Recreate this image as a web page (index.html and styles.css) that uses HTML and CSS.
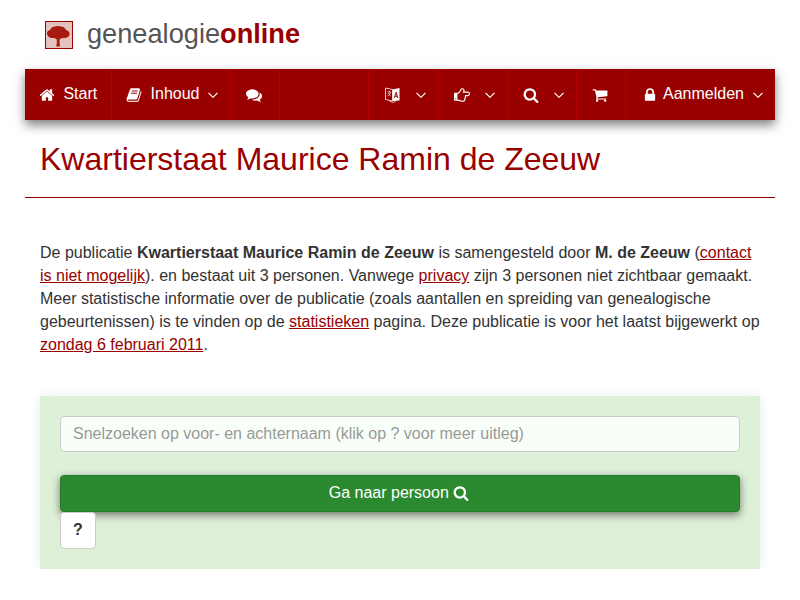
FILE: index.html
```html
<!DOCTYPE html>
<html lang="nl">
<head>
    <meta charset="UTF-8">
    <meta name="viewport" content="width=device-width, initial-scale=1.0">
    <title>Kwartierstaat Maurice Ramin de Zeeuw</title>
    <link rel="stylesheet" href="styles.css">
</head>
<body>
    <div class="page">
        <!-- Logo -->
        <header class="brand">
            <svg class="brand-logo" viewBox="0 0 28 28">
                <rect x="0.5" y="0.5" width="27" height="27" fill="#e2c3bf" stroke="#990000"/>
                <path class="tree" d="M2 13.500c-.5-2.500 1-4 3-4.500 1-2.500 3-3.500 5-3.500 1-.8 4-.8 6 0 2 0 4 1 5 3.500 2 .5 4 2 3.500 4.500-.5 2.500-3 4-6 3.500-1.500 0-3 .5-3.800 1.500-.3 1.500-.2 4 .5 7h-4c.7-3 .8-5.500.5-7-.8-1-2.300-1.500-3.800-1.500-3 .5-5-1-5.500-3.500z" fill="#a81c10"/>
            </svg>
            <span class="brand-name">genealogie<b>online</b></span>
        </header>

        <!-- Navigation -->
        <nav class="navbar">
            <a class="nav-item">
                <svg class="icon icon-text" viewBox="0 0 1792 1792"><path d="M1472 992v480q0 26-19 45t-45 19h-384v-384h-256v384h-384q-26 0-45-19t-19-45v-480q0-1 .5-3t.5-3l575-474 575 474q1 2 1 6zm223-69l-62 74q-8 9-21 11h-3q-13 0-21-7l-692-577-692 577q-12 8-24 7-13-2-21-11l-62-74q-8-10-7-23.500t11-21.500l719-599q32-26 76-26t76 26l244 204v-195q0-14 9-23t23-9h192q14 0 23 9t9 23v408l219 182q10 8 11 21.500t-7 23.500z"/></svg>
                Start
            </a>
            <a class="nav-item">
                <svg class="icon icon-text" viewBox="0 0 1792 1792"><path d="M1703 478q40 57 18 129l-275 906q-19 64-76.500 107.500t-122.500 43.500h-923q-77 0-148.500-53.500t-99.500-131.500q-24-67-2-127 0-4 3-27t4-37q1-8-3-21.500t-3-19.500q2-11 8-21t16.500-23.500 16.500-23.500q23-38 45-91.500t30-91.500q3-10 .5-30t-.5-28q3-11 17-28t17-23q21-36 42-92t25-90q1-9-2.500-32t.5-28q4-13 22-30.500t22-22.500q19-26 42.500-84.500t27.500-96.500q1-8-3-25.500t-2-26.500q2-8 9-18t18-23 17-21q8-12 16.500-30.500t15-35 16-36 19.500-32 26.500-23.500 36-11.500 47.500 5.500l-1 3q38-9 51-9h761q74 0 114 56t18 130l-274 906q-36 119-71.500 153.500t-128.500 34.500h-869q-27 0-38 15-11 16-1 43 24 70 144 70h923q29 0 56-15.500t35-41.500l300-987q7-22 5-57 38 15 59 43zm-1064 2q-4 13 2 22.500t20 9.500h608q13 0 25.500-9.500t16.500-22.500l21-64q4-13-2-22.500t-20-9.500h-608q-13 0-25.500 9.500t-16.500 22.500zm-83 256q-4 13 2 22.500t20 9.500h608q13 0 25.500-9.500t16.500-22.500l21-64q4-13-2-22.500t-20-9.500h-608q-13 0-25.500 9.500t-16.500 22.500z"/></svg>
                Inhoud
                <svg class="caret" viewBox="0 0 10 6"><path d="M.5 .8l4.500 4.500 4.500-4.500"/></svg>
            </a>
            <a class="nav-item">
                <svg class="icon icon-solo" viewBox="0 0 1792 1792"><path d="M1408 768q0 139-94 257t-256.500 186.500-353.500 68.500q-86 0-176-16-124 88-278 128-36 9-86 16h-3q-11 0-20.500-8t-11.500-21q-1-3-1-6.500t.5-6.500 2-6l2.500-5 3.500-5.500 4-5 4.500-5 4-4.500q5-6 23-25t26-29.500 22.500-29 25-38.500 20.500-44q-124-72-195-177t-71-224q0-139 94-257t256.500-186.500 353.500-68.500 353.500 68.500 256.500 186.500 94 257zm384 256q0 120-71 224.500t-195 176.500q10 24 20.500 44t25 38.500 22.500 29 26 29.500 23 25q1 1 4 4.500t4.500 5 4 5 3.500 5.500l2.500 5 2 6 .5 6.500-1 6.500q-3 14-13 22t-22 7q-50-7-86-16-154-40-278-128-90 16-176 16-271 0-472-132 58 4 88 4 161 0 309-45t264-129q125-92 192-212t67-254q0-77-23-152 129 71 204 178t75 230z"/></svg>
            </a>

            <div class="nav-right">
                <a class="nav-item">
                    <svg class="icon icon-lang" viewBox="0 0 14 16">
                        <path d="M0 1l7 1.500v11.500l-7-1.500z" fill="none" stroke="#fff" stroke-width="0.8"/>
                        <path d="M2 5h3.500M3.700 4v1M5 5c-.3 2-1.500 3.500-3 4M2.800 6c.4 1.200 1.200 2.200 2.400 2.800" fill="none" stroke="#fff" stroke-width="0.7"/>
                        <path d="M7 2.500l7-1.500v12.500l-7 .5z"/>
                        <path d="M8.300 11l1.900-6h1l1.500 6h-1.200l-.3-1.300h-1.700l-.4 1.300zM10 8.800h1.100l-.5-2.200z" fill="#990000"/>
                        <path d="M4 14l3.500 1.500 3-1.500" fill="none" stroke="#fff" stroke-width="0.7"/>
                    </svg>
                    <svg class="caret" viewBox="0 0 10 6"><path d="M.5 .8l4.500 4.500 4.500-4.500"/></svg>
                </a>
                <a class="nav-item">
                    <svg class="icon icon-gap" viewBox="0 0 1792 1792"><path d="M256 1344q0-26-19-45t-45-19-45 19-19 45 19 45 45 19 45-19 19-45zm1408-576q0-51-39-89.500t-89-38.500h-576q0-20 15-48.500t33-55 33-68 15-84.500q0-67-44.500-97.500t-115.500-30.500q-24 0-90 139-24 44-37 65-40 64-112 145-71 81-101 106-69 57-140 57h-32v640h32q72 0 167 32t193.500 64 179.500 32q189 0 189-167 0-26-5-56 30-16 47.500-52.500t17.500-73.500-18-69q53-50 53-119 0-25-10-55.500t-25-47.500h331q52 0 90-38t38-90zm128-1q0 105-75.500 181t-180.500 76h-169q-4 62-37 119 3 21 3 43 0 101-60 178 1 139-85 219.500t-227 80.500q-133 0-322-69-164-59-223-59h-288q-53 0-90.500-37.500t-37.500-90.500v-640q0-53 37.500-90.500t90.500-37.500h288q10 0 21.500-4.500t23.500-14 22.500-18 24-22.500 20.500-21.500 19-21.500 14-17q65-74 100-129 13-21 33-62t37-72 40.500-63 55-49.500 69.500-17.500q125 0 206.500 67t81.500 189q0 68-22 128h374q104 0 180 76t76 179z"/></svg>
                    <svg class="caret" viewBox="0 0 10 6"><path d="M.5 .8l4.500 4.500 4.500-4.500"/></svg>
                </a>
                <a class="nav-item">
                    <svg class="icon icon-gap" viewBox="0 0 1792 1792"><path d="M1216 832q0-185-131.500-316.500t-316.500-131.500-316.500 131.500-131.500 316.500 131.500 316.500 316.500 131.500 316.500-131.500 131.500-316.500zm512 832q0 52-38 90t-90 38q-54 0-90-38l-343-342q-179 124-399 124-143 0-273.500-55.500t-225-150-150-225-55.500-273.500 55.500-273.500 150-225 225-150 273.500-55.500 273.500 55.500 225 150 150 225 55.500 273.500q0 220-124 399l343 343q37 37 37 90z"/></svg>
                    <svg class="caret" viewBox="0 0 10 6"><path d="M.5 .8l4.500 4.500 4.500-4.500"/></svg>
                </a>
                <a class="nav-item">
                    <svg class="icon icon-solo" viewBox="0 0 1792 1792"><path d="M704 1536q0 52-38 90t-90 38-90-38-38-90 38-90 90-38 90 38 38 90zm896 0q0 52-38 90t-90 38-90-38-38-90 38-90 90-38 90 38 38 90zm128-1088v512q0 24-16.500 42.500t-40.500 21.500l-1044 122q13 60 13 70 0 16-24 64h920q26 0 45 19t19 45-19 45-45 19h-1024q-26 0-45-19t-19-45q0-11 8-31.500t16-36 21.500-40 15.500-29.500l-177-823h-204q-26 0-45-19t-19-45 19-45 45-19h256q16 0 28.500 6.500t19.500 15.500 13 24.500 8 26 5.500 29.500 4.500 26h1201q26 0 45 19t19 45z"/></svg>
                </a>
                <a class="nav-item nav-last">
                    <svg class="icon icon-lock" viewBox="0 0 1792 1792"><path d="M640 768h512v-192q0-106-75-181t-181-75-181 75-75 181v192zm832 96v576q0 40-28 68t-68 28h-960q-40 0-68-28t-28-68v-576q0-40 28-68t68-28h32v-192q0-184 132-316t316-132 316 132 132 316v192h32q40 0 68 28t28 68z"/></svg>
                    Aanmelden
                    <svg class="caret" viewBox="0 0 10 6"><path d="M.5 .8l4.500 4.500 4.500-4.500"/></svg>
                </a>
            </div>
        </nav>

        <!-- Title -->
        <h1 class="page-title">Kwartierstaat Maurice Ramin de Zeeuw</h1>

        <!-- Intro -->
        <p class="intro">De publicatie <b>Kwartierstaat Maurice Ramin de Zeeuw</b> is samengesteld door <b>M. de Zeeuw</b> (<a>contact is niet mogelijk</a>). en bestaat uit 3 personen. Vanwege <a>privacy</a> zijn 3 personen niet zichtbaar gemaakt. Meer statistische informatie over de publicatie (zoals aantallen en spreiding van genealogische gebeurtenissen) is te vinden op de <a>statistieken</a> pagina. Deze publicatie is voor het laatst bijgewerkt op <a>zondag 6 februari 2011</a>.</p>

        <!-- Search -->
        <form class="search-panel">
            <input class="search-input" type="text" placeholder="Snelzoeken op voor- en achternaam (klik op ? voor meer uitleg)">
            <button class="btn-go" type="button">Ga naar persoon
                <svg class="icon" viewBox="0 0 1792 1792"><path d="M1216 832q0-185-131.500-316.500t-316.500-131.500-316.500 131.500-131.500 316.500 131.500 316.500 316.500 131.500 316.500-131.500 131.500-316.500zm512 832q0 52-38 90t-90 38q-54 0-90-38l-343-342q-179 124-399 124-143 0-273.500-55.500t-225-150-150-225-55.500-273.500 55.500-273.500 150-225 225-150 273.500-55.500 273.500 55.500 225 150 150 225 55.500 273.500q0 220-124 399l343 343q37 37 37 90z"/></svg>
            </button>
            <button class="btn-help" type="button">?</button>
        </form>
    </div>
</body>
</html>
```

FILE: styles.css
```css
html, body {
    margin: 0;
    overflow: hidden;
}
body {
    font-family: "Liberation Sans", Arial, sans-serif;
    font-size: 16px;
    line-height: 1.42857;
    color: #333;
    background: #fff;
}
.page {
    width: 750px;
    margin: 0 auto;
}

/* Logo */
.brand {
    display: flex;
    align-items: center;
    height: 69px;
    padding-left: 20px;
}
.brand-logo {
    width: 28px;
    height: 28px;
    margin-right: 14px;
}
.tree {
    filter: blur(0.4px);
}
.brand-name {
    font-size: 27.2px;
    color: #555;
}
.brand-name b {
    color: #990000;
}

/* Navigation */
.navbar {
    display: flex;
    height: 51px;
    background: #990000;
    color: #fff;
    box-shadow: 0 5px 10px rgba(0, 0, 0, 0.5);
}
.nav-item {
    display: flex;
    align-items: center;
    padding: 0 14px 0 15px;
    border-right: 1px solid #b30000;
    cursor: pointer;
}
.nav-right {
    display: flex;
    margin-left: auto;
    border-left: 1px solid #b30000;
}
.nav-last {
    border-right: none;
}
.icon {
    width: 16px;
    height: 16px;
    fill: currentColor;
    flex: none;
}
.icon-text {
    margin: 0 8.4px 0 -1px;
}
.icon-solo {
    margin-right: 3px;
}
.icon-gap {
    margin-right: 5px;
}
.icon-lang {
    width: 15px;
    margin: 0 6px 0 1px;
}
.icon-lock {
    margin: 0 5px 0 1px;
}
.caret {
    width: 10px;
    height: 6px;
    margin: 0 -2px 0 8px;
    fill: none;
    stroke: #fff;
    stroke-width: 1.2;
}
.icon-gap + .caret,
.icon-lang + .caret {
    margin-left: 10px;
}
.nav-last .caret {
    margin-left: 9px;
}

/* Title */
.page-title {
    margin: 0;
    padding: 20px 15px 19px;
    font-size: 32px;
    font-weight: 400;
    line-height: 1.2;
    color: #990000;
    border-bottom: 1px solid #990000;
}

/* Intro */
.intro {
    margin: 0;
    padding: 44px 15px 39px;
}
.intro a {
    color: #990000;
    text-decoration: underline;
}

/* Search */
.search-panel {
    margin: 0 15px;
    padding: 20px;
    background: #dff0d8;
    box-shadow: 0 0 12px rgba(0, 0, 0, 0.08);
}
.search-input {
    display: block;
    box-sizing: border-box;
    width: 100%;
    height: 36px;
    padding: 6px 12px;
    font: inherit;
    background: #f8fff8;
    border: 1px solid #ccc;
    border-radius: 4px;
}
.search-input::placeholder {
    color: #999;
}
.btn-go {
    display: block;
    width: 100%;
    height: 37px;
    margin-top: 23px;
    font: inherit;
    color: #fff;
    background: #2b8a2f;
    border: 1px solid #267a2a;
    border-radius: 4px;
    box-shadow: 0 3px 8px rgba(0, 0, 0, 0.5);
}
.btn-go .icon {
    margin: 0 2px 0 0;
    vertical-align: -3px;
}
.btn-help {
    display: block;
    width: 36px;
    height: 37px;
    font: inherit;
    font-weight: 700;
    color: #333;
    background: #fff;
    border: 1px solid #ccc;
    border-radius: 4px;
}
```
